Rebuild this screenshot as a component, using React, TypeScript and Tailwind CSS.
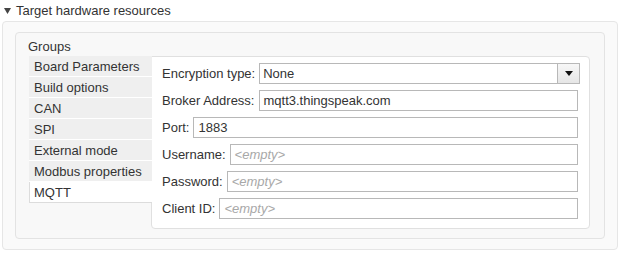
const tabs = [
  'Board Parameters',
  'Build options',
  'CAN',
  'SPI',
  'External mode',
  'Modbus properties',
  'MQTT',
];

const fields = [
  { label: 'Broker Address:', value: 'mqtt3.thingspeak.com' },
  { label: 'Port:', value: '1883' },
  { label: 'Username:', value: '' },
  { label: 'Password:', value: '' },
  { label: 'Client ID:', value: '' },
];

function Field({ label, value }: { label: string; value: string }) {
  return (
    <div className="flex items-center h-[21px] mt-[6px] pr-[2px]">
      <span className="mr-[4px] whitespace-nowrap">{label}</span>
      <div className="flex-1 h-[21px] border border-[#b8b8b8] bg-white flex items-center pl-[4px]">
        {value ? (
          <span>{value}</span>
        ) : (
          <span className="italic text-[#a8a8a8]">&lt;empty&gt;</span>
        )}
      </div>
    </div>
  );
}

export default function App() {
  return (
    <div className="w-[623px] h-[253px] bg-white text-[13px] text-[#333] font-['Liberation_Sans',Arial,sans-serif] leading-none">
      <div className="h-[20px] flex items-center pl-[4px]">
        <svg width="7" height="6" viewBox="0 0 7 6" className="mr-[5px] mt-[1px]">
          <path d="M0 0 L7 0 L3.5 6 Z" fill="#444" />
        </svg>
        <span>Target hardware resources</span>
      </div>

      <div className="ml-[2px] mr-[5px] mt-[1px] h-[229px] border border-[#e6e6e6] rounded-[4px] bg-[#fafafa] pt-[10px] px-[12px]">
        <div className="h-[207px] border border-[#e3e3e3] rounded-[4px] bg-[#f8f8f8] pl-[13px] pr-[14px]">
          <div className="h-[23px] flex items-end pb-[3px] ml-[-1px]">Groups</div>

          <div className="flex">
            <div className="w-[123px] relative z-10 mr-[-1px] self-start">
              {tabs.map((t) => {
                const active = t === 'MQTT';
                return (
                  <div
                    key={t}
                    className={`h-[21px] flex items-center pt-[1px] ${
                      active
                        ? 'bg-white border-l border-b border-[#dcdcdc] pl-[4px]'
                        : 'bg-[#efefef] border-b border-white pl-[5px]'
                    }`}
                  >
                    {t}
                  </div>
                );
              })}
            </div>

            <div className="flex-1 h-[173px] bg-white border border-[#e0e0e0] rounded-r-[4px] rounded-bl-[4px] pl-[10px] pr-[9px] pt-[6px]">
              <div className="flex items-center h-[21px]">
                <span className="mr-[4px] whitespace-nowrap">Encryption type:</span>
                <div className="flex-1 h-[21px] border border-[#b8b8b8] bg-white flex items-stretch">
                  <div className="flex-1 flex items-center pl-[3px]">None</div>
                  <div className="w-[22px] border-l border-[#b8b8b8] bg-gradient-to-b from-[#f7f7f7] to-[#e6e6e6] flex items-center justify-center">
                    <svg width="8" height="5" viewBox="0 0 8 5">
                      <path d="M0 0 L8 0 L4 5 Z" fill="#111" />
                    </svg>
                  </div>
                </div>
              </div>
              {fields.map((f) => (
                <Field key={f.label} label={f.label} value={f.value} />
              ))}
            </div>
          </div>
        </div>
      </div>
    </div>
  );
}
